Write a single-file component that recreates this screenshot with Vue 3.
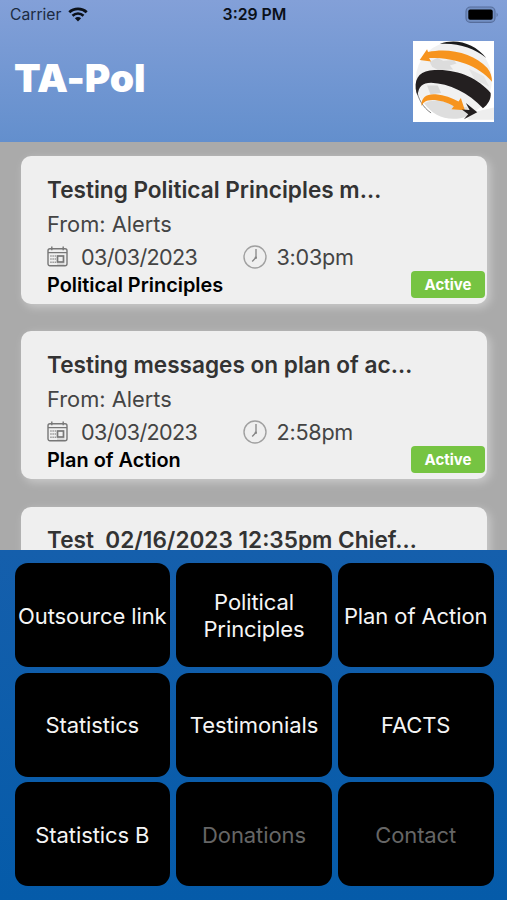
<template>
  <div class="screen">
    <header class="header">
      <!-- Status bar -->
      <div class="status-bar">
        <div class="carrier">
          <span class="carrier-name">Carrier</span>
          <svg class="wifi" viewBox="0 0 20 15">
            <path d="M1.3 5.2 C6 0.7 14 0.7 18.7 5.2" fill="none" stroke="#0b1119" stroke-width="2.8" />
            <path d="M4.5 8.7 C7.6 5.7 12.4 5.7 15.5 8.7" fill="none" stroke="#0b1119" stroke-width="2.6" />
            <path d="M6.9 11.2 C8.8 9.5 11.2 9.5 13.1 11.2 L10 14.4 Z" fill="#0b1119" />
          </svg>
        </div>
        <span class="clock">3:29 PM</span>
        <svg class="battery" viewBox="0 0 34 18">
          <rect x="1" y="1" width="29" height="15.4" rx="4.4" fill="#7390c4" stroke="#566d9b" stroke-width="1.1" />
          <rect x="3.3" y="3.6" width="24.4" height="10.2" rx="1.8" fill="#000" />
          <path d="M31.6 6.4 Q33.8 8.7 31.6 11 Z" fill="#566d9b" />
        </svg>
      </div>

      <!-- Title and logo -->
      <div class="brand">
        <h1 class="brand-title">TA-Pol</h1>
        <svg class="logo" viewBox="38 35 242 242">
          <rect x="38" y="35" width="242" height="242" fill="#fff" />
          <path d="M190 254 L280 234 L280 270 L205 270 Z" fill="#eeeeee" />
          <circle cx="160" cy="151" r="114" fill="#f1f1f1" />
          <path d="M88 98 L110 85 L128 94 L160 92 L168 102 L148 108 L158 120 L112 122 L95 112 Z" fill="#dcdcdc" />
          <path d="M80 168 L112 168 L122 190 L90 194 Z" fill="#d8d8d8" />
          <path d="M72 222 C98 205 140 214 166 232 L200 232 L204 258 C150 280 100 262 72 222 Z" fill="#dedede" />
          <path d="M205 118 L250 140 L266 172 L222 150 Z" fill="#e4e4e4" />
          <path d="M118 44 C166 26 222 42 257 86 C220 56 172 40 118 44 Z" fill="#1b1b1b" />
          <path d="M58 92 L80 60 L83 68 C146 54 220 72 260 116 C270 128 274 142 274 157 C232 106 158 84 86 86 L92 96 Z" fill="#f7941e" />
          <path d="M46 178 C43 142 62 124 102 122 C170 118 232 146 270 190 C272 208 262 224 247 236 C204 190 146 162 92 160 C66 160 54 172 52 198 C48 192 47 184 46 178 Z" fill="#231f20" />
          <path d="M49 180 C52 206 68 234 92 250" fill="none" stroke="#444" stroke-width="2" />
          <path d="M63 229 C62 202 80 192 106 194 C132 196 154 205 174 216 L181 205 L193 242 L153 239 L160 230 C134 214 100 208 82 213 C70 217 68 222 63 229 Z" fill="#f7941e" />
          <path d="M196 220 L230 248 L190 269 L203 254 L184 240 L207 241 Z" fill="#231f20" />
        </svg>
      </div>
    </header>

    <!-- Message list -->
    <main class="message-list">
      <article v-for="message in messages" :key="message.title" class="message-card">
        <h2 class="message-title">{{ message.title }}</h2>
        <template v-if="message.from">
          <p class="message-from">From: {{ message.from }}</p>
          <div class="message-meta">
            <svg class="calendar-icon" viewBox="0 0 21 21">
              <g fill="none" stroke="#777" stroke-width="1.4">
                <rect x="1" y="2.8" width="19" height="17" rx="2" />
                <path d="M1 6.6 H20 M4.8 0.5 V4.2 M16.2 0.5 V4.2" />
                <rect x="10.5" y="10" width="6" height="6" stroke-width="1.7" />
              </g>
              <path d="M3.2 10 H9 M3.2 13 H9 M3.2 16.2 H9" stroke="#999" stroke-width="1.4" stroke-dasharray="1.5 0.7" />
              <path d="M10 18.1 H17.5" stroke="#bbb" stroke-width="0.9" />
            </svg>
            <span class="message-date">{{ message.date }}</span>
            <svg class="clock-icon" viewBox="0 0 24 24">
              <circle cx="12" cy="12" r="11" fill="none" stroke="#a0a0a0" stroke-width="1.4" />
              <path d="M13 4 V12.5 L9.2 16.5" fill="none" stroke="#858585" stroke-width="1.3" />
              <circle cx="12.8" cy="12.8" r="1.2" fill="#858585" />
            </svg>
            <span class="message-time">{{ message.time }}</span>
          </div>
          <p class="message-category">{{ message.category }}</p>
          <span class="status-badge">Active</span>
        </template>
      </article>
    </main>

    <!-- Menu tiles -->
    <nav class="menu">
      <button
        v-for="item in menuItems"
        :key="item.label"
        class="menu-item"
        :disabled="item.disabled"
      >
        {{ item.label }}
      </button>
    </nav>
  </div>
</template>

<script setup>
import { ref } from 'vue';

const messages = ref([
  {
    title: 'Testing Political Principles m…',
    from: 'Alerts',
    date: '03/03/2023',
    time: '3:03pm',
    category: 'Political Principles'
  },
  {
    title: 'Testing messages on plan of ac…',
    from: 'Alerts',
    date: '03/03/2023',
    time: '2:58pm',
    category: 'Plan of Action'
  },
  {
    title: 'Test  02/16/2023 12:35pm Chief…'
  }
]);

const menuItems = [
  { label: 'Outsource link' },
  { label: 'Political Principles' },
  { label: 'Plan of Action' },
  { label: 'Statistics' },
  { label: 'Testimonials' },
  { label: 'FACTS' },
  { label: 'Statistics B' },
  { label: 'Donations', disabled: true },
  { label: 'Contact', disabled: true }
];
</script>

<style>
body {
  margin: 0;
  overflow: hidden;
}
</style>

<style scoped>
.screen {
  width: 507px;
  height: 900px;
  display: flex;
  flex-direction: column;
  overflow: hidden;
  font-family: Inter, 'Liberation Sans', sans-serif;
}

.header {
  flex: none;
  height: 142px;
  background: linear-gradient(#83a0d8, #638fcd);
}

.status-bar {
  display: grid;
  grid-template-columns: 1fr auto 1fr;
  align-items: center;
  height: 29px;
  padding: 0 8px 0 10px;
  box-sizing: border-box;
  color: #0b1119;
}

.carrier {
  display: flex;
  align-items: center;
  gap: 7px;
}

.carrier-name {
  font-size: 15.7px;
  color: #1c2b42;
}

.wifi {
  width: 20px;
  height: 15px;
}

.clock {
  font-size: 15.8px;
  font-weight: 600;
}

.battery {
  justify-self: end;
  width: 34px;
  height: 18px;
}

.brand {
  display: flex;
  justify-content: space-between;
  padding: 12px 13.5px 0 14px;
}

.brand-title {
  margin: 14px 0 0;
  font-size: 39px;
  line-height: 46px;
  font-weight: 900;
  letter-spacing: -0.2px;
  color: #fff;
}

.logo {
  width: 81px;
  height: 81px;
}

.message-list {
  height: 407.5px;
  flex: none;
  box-sizing: border-box;
  display: flex;
  flex-direction: column;
  gap: 27.3px;
  padding: 14px 20px 0 21px;
  overflow: hidden;
  background: #aaa;
}

.message-card {
  position: relative;
  flex: none;
  height: 148px;
  box-sizing: border-box;
  padding: 16.5px 26px 0;
  border-radius: 10px;
  background: #efefef;
  box-shadow: 3px 3px 10px rgba(255, 255, 255, 0.4);
}

.message-title {
  margin: 0;
  font-size: 22.6px;
  line-height: 34px;
  font-weight: 600;
  color: #333;
  white-space: pre;
}

.message-from {
  margin: 0;
  font-size: 21.8px;
  line-height: 34px;
  color: #444;
}

.message-meta {
  display: grid;
  grid-template-columns: 34px 161.5px 34px 1fr;
  align-items: center;
  height: 32px;
  font-size: 21.6px;
  color: #444;
}

.message-date {
  letter-spacing: -0.65px;
}

.message-time {
  letter-spacing: -0.25px;
}

.calendar-icon {
  width: 21px;
  height: 21px;
}

.clock-icon {
  width: 24px;
  height: 24px;
}

.message-category {
  margin: 0;
  padding-top: 1px;
  font-size: 19.9px;
  line-height: 22px;
  font-weight: 600;
  color: #000;
}

.status-badge {
  position: absolute;
  right: 2px;
  bottom: 6.5px;
  width: 74px;
  height: 27px;
  border-radius: 4px;
  background: #76c442;
  color: #fff;
  font-size: 15px;
  line-height: 27px;
  font-weight: 700;
  text-align: center;
}

.menu {
  flex: 1;
  display: grid;
  grid-template-columns: repeat(3, 1fr);
  grid-template-rows: repeat(3, 104px);
  gap: 5.5px 6px;
  padding: 13.5px 13.5px 0 14.5px;
  background: linear-gradient(#155fac, #055ba9);
}

.menu-item {
  min-width: 0;
  padding: 2px 0 0;
  border: none;
  border-radius: 13px;
  background: #000;
  color: #f5f5f5;
  font-family: inherit;
  font-size: 22px;
  line-height: 27px;
  letter-spacing: -0.1px;
}

.menu-item:disabled {
  color: #666;
}
</style>
